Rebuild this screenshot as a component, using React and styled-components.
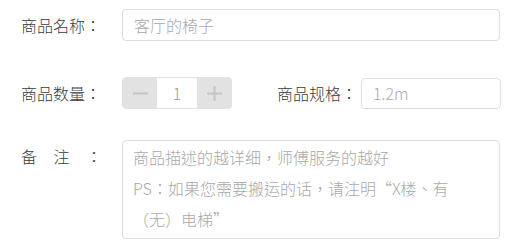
import React from 'react';
import styled, { createGlobalStyle } from 'styled-components';

const GlobalStyle = createGlobalStyle`
  body {
    margin: 0;
    background: #fff;
    font-family: "Noto Sans CJK TC", "Noto Sans", sans-serif;
    font-weight: 300;
    text-spacing-trim: space-all;
  }
`;

export default function App() {
  return (
    <>
      <GlobalStyle />
      <Form>
        <Row $mt={9}>
          <Label>商品名称：</Label>
          <TextInput $w={378} placeholder="客厅的椅子" />
        </Row>
        <Row $mt={36}>
          <Label>商品数量：</Label>
          <Stepper>
            <StepBtn type="button" aria-label="减少">
              <svg width="15" height="15" viewBox="0 0 15 15">
                <path d="M0 7.5h15" stroke="currentColor" strokeWidth="2" />
              </svg>
            </StepBtn>
            <Count>1</Count>
            <StepBtn type="button" aria-label="增加">
              <svg width="15" height="15" viewBox="0 0 15 15">
                <path d="M0 7.5h15M7.5 0v15" stroke="currentColor" strokeWidth="2" />
              </svg>
            </StepBtn>
          </Stepper>
          <Label $ml={45} $mr={3}>商品规格：</Label>
          <TextInput $w={140} $h={31} placeholder="1.2m" />
        </Row>
        <Row $mt={31} $top>
          <Label $spread>
            <span>备</span>
            <span>注</span>
            <span>：</span>
          </Label>
          <Note
            placeholder={
              '商品描述的越详细，师傅服务的越好\nPS：如果您需要搬运的话，请注明“X楼、有（无）电梯”'
            }
          />
        </Row>
      </Form>
    </>
  );
}

const Form = styled.form`
  display: flex;
  flex-direction: column;
  padding-left: 21px;
`;

const Row = styled.div`
  display: flex;
  align-items: ${(p) => (p.$top ? 'flex-start' : 'center')};
  margin-top: ${(p) => p.$mt}px;
`;

const Label = styled.label`
  flex-shrink: 0;
  width: 81px;
  margin-left: ${(p) => p.$ml || 0}px;
  margin-right: ${(p) => (p.$mr != null ? p.$mr : 20)}px;
  font-size: 16px;
  line-height: 31px;
  color: #3a3a3a;
  white-space: nowrap;
  ${(p) =>
    p.$spread &&
    `
    display: flex;
    justify-content: space-between;
    margin-top: 1px;
  `}
`;

const TextInput = styled.input`
  box-sizing: border-box;
  width: ${(p) => p.$w}px;
  height: ${(p) => p.$h || 32}px;
  padding: 0 11px;
  border: 1px solid #dedede;
  border-radius: 4px;
  font-family: inherit;
  font-weight: inherit;
  font-size: 16px;
  color: #333;
  outline: none;

  &::placeholder {
    color: #a9a9a9;
  }
`;

const Stepper = styled.div`
  box-sizing: border-box;
  display: flex;
  width: 110px;
  height: 32px;
  border: 1px solid #e2e2e2;
  border-radius: 4px;
  background: #e2e2e2;
  overflow: hidden;
`;

const StepBtn = styled.button`
  flex: 1;
  display: flex;
  align-items: center;
  justify-content: center;
  padding: 0;
  border: none;
  background: transparent;
  color: #c4c4c4;
  cursor: pointer;
`;

const Count = styled.div`
  width: 40px;
  display: flex;
  align-items: center;
  justify-content: center;
  background: #fff;
  font-size: 16px;
  color: #999;
`;

const Note = styled.textarea`
  box-sizing: border-box;
  width: 378px;
  height: 99px;
  padding: 1px 10px;
  border: 1px solid #dedede;
  border-radius: 4px;
  font-family: inherit;
  font-weight: inherit;
  font-size: 16px;
  line-height: 31px;
  color: #333;
  resize: none;
  outline: none;
  text-spacing-trim: space-all;

  &::placeholder {
    color: #a9a9a9;
  }
`;
